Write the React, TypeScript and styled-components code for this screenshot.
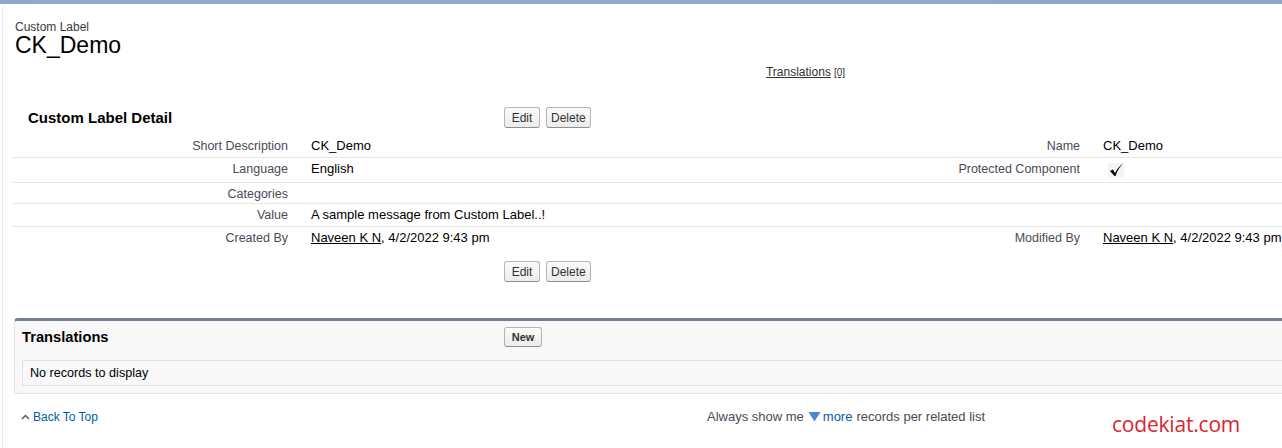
import React from "react";
import styled, { createGlobalStyle } from "styled-components";

const Global = createGlobalStyle`
  html, body { margin: 0; padding: 0; background: #ffffff; overflow: hidden; }
  body { font-family: "Liberation Sans", Arial, sans-serif; color: #000; }
`;

const TopStrip = styled.div`
  height: 4px;
  background: linear-gradient(90deg, #8fa7cb, #90a9cd 40%, #8ea6ca);
`;

const Page = styled.div`
  width: 1600px;
  margin-left: 2px;
  background: #fff;
  border-left: 1px solid #e3e6ea;
  border-top-left-radius: 5px;
  padding: 0 0 40px 10px;
`;

const Header = styled.div`
  padding: 16px 0 0 2px;
  display: flex;
  flex-direction: column;
`;

const HeaderType = styled.div`
  font-size: 12px;
  line-height: 14px;
  color: #3b3b3b;
`;

const HeaderName = styled.h1`
  margin: 0;
  font-size: 23px;
  line-height: 22px;
  font-weight: normal;
  color: #000;
`;

const LinksRow = styled.div`
  display: flex;
  align-items: baseline;
  justify-content: center;
  margin-top: 9px;
  width: 1585px;
`;

const RelLink = styled.a`
  font-size: 12px;
  color: #333;
  text-decoration: underline;
  line-height: 14px;
`;

const Count = styled.span`
  font-size: 10px;
  color: #333;
  margin-left: 3px;
  text-decoration: underline;
`;

const Block = styled.div`
  margin-top: 28px;
  width: 1585px;
`;

const ButtonRow = styled.div<{ $pt: number; $pb: number }>`
  display: grid;
  grid-template-columns: 491px auto;
  align-items: center;
  padding-top: ${(p) => p.$pt}px;
  padding-bottom: ${(p) => p.$pb}px;
`;

const BlockTitle = styled.h2`
  margin: 0;
  padding-left: 15px;
  font-size: 15px;
  font-weight: bold;
  color: #000;
`;

const Buttons = styled.div`
  display: flex;
  gap: 6px;
`;

const Btn = styled.button`
  font-family: "Liberation Sans", Arial, sans-serif;
  font-size: 12px;
  color: #333;
  height: 21px;
  min-width: 36px;
  padding: 0 4px;
  background: linear-gradient(#fbfbfb, #ececec);
  border: 1px solid #b5b5b5;
  border-bottom-color: #8f8f8f;
  border-radius: 3px;
  cursor: pointer;
`;

const NewBtn = styled(Btn)`
  height: 20px;
  min-width: 38px;
  font-weight: bold;
  font-size: 11px;
  padding: 0 6px;
`;

const Row = styled.div<{ $h: number; $last?: boolean }>`
  display: grid;
  grid-template-columns: 285px 507px 285px 1fr;
  height: ${(p) => p.$h}px;
  border-bottom: ${(p) => (p.$last ? "none" : "1px solid #e6e6e6")};
`;

const Label = styled.div`
  text-align: right;
  padding: 4px 10px 0 0;
  font-size: 12.5px;
  line-height: 14px;
  color: #4a4a56;
  white-space: nowrap;
`;

const Value = styled.div`
  padding: 4px 0 0 13px;
  font-size: 13px;
  line-height: 14px;
  color: #000;
  white-space: nowrap;
`;

const UserLink = styled.a`
  color: #000;
  text-decoration: underline;
`;

const CheckBox = styled.span`
  display: inline-flex;
  margin: 0 0 0 4px;
`;

const Related = styled.div`
  margin-top: 36px;
  margin-left: 1px;
  width: 1584px;
  background: #f8f8f8;
  border: 1px solid #e4e4e4;
  border-top: 3px solid #747e96;
  border-radius: 4px;
  padding: 0 7px 7px 7px;
`;

const RelHeader = styled.div`
  display: grid;
  grid-template-columns: 482px auto;
  align-items: start;
  height: 33px;
  padding-top: 6px;
`;

const RelTitle = styled.h3`
  margin: 0;
  font-size: 14.7px;
  line-height: 20px;
  font-weight: bold;
  color: #000;
`;

const EmptyBox = styled.div`
  border: 1px solid #e0e3e5;
  background: #f8f8f8;
  height: 24px;
  display: flex;
  align-items: center;
  padding-left: 7px;
  font-size: 12.6px;
  color: #000;
`;

const Footer = styled.div`
  display: grid;
  grid-template-columns: 686px auto;
  align-items: center;
  margin-top: 15px;
  padding-left: 8px;
  font-size: 12px;
`;

const BackTop = styled.a`
  display: inline-flex;
  align-items: center;
  gap: 3px;
  color: #015ba7;
  text-decoration: none;
`;

const ShowMore = styled.div`
  color: #4a4a56;
  font-size: 13px;
  display: flex;
  align-items: center;
  gap: 4px;
`;

const MoreLink = styled.a`
  color: #015ba7;
  text-decoration: none;
  margin-left: -2px;
`;

const Watermark = styled.div`
  position: absolute;
  left: 1112px;
  top: 410px;
  font-family: "Open Sans", "Noto Sans", sans-serif;
  font-size: 21px;
  color: #d8262d;
  letter-spacing: -0.2px;
`;

const Check = () => (
  <svg width="18" height="16" viewBox="0 0 18 16">
    <rect x="1" y="1" width="16" height="14" fill="#f3f3f3" />
    <path d="M3 9 L6 7.5 L8 11 C10 7 12.5 4 16 1.5 C13 4.5 10.5 8 8.5 14 L7.5 14 Z" fill="#000" />
  </svg>
);

const Caret = () => (
  <svg width="9" height="6" viewBox="0 0 9 6">
    <path d="M1 5 L4.5 1.5 L8 5" fill="none" stroke="#555" strokeWidth="1.4" />
  </svg>
);

const Tri = () => (
  <svg width="13" height="11" viewBox="0 0 13 11">
    <path d="M0.5 1 L12.5 1 L6.5 10.5 Z" fill="#4b86d0" />
  </svg>
);

type Field = { label: string; value: React.ReactNode; label2?: string; value2?: React.ReactNode; h: number };

const fields: Field[] = [
  { label: "Short Description", value: "CK_Demo", label2: "Name", value2: "CK_Demo", h: 22 },
  { label: "Language", value: "English", label2: "Protected Component", value2: <CheckBox><Check /></CheckBox>, h: 24 },
  { label: "Categories", value: "", h: 20 },
  { label: "Value", value: "A sample message from Custom Label..!", h: 22 },
  {
    label: "Created By",
    value: (<><UserLink href="#">Naveen K N</UserLink>, 4/2/2022 9:43 pm</>),
    label2: "Modified By",
    value2: (<><UserLink href="#">Naveen K N</UserLink>, 4/2/2022 9:43 pm</>),
    h: 24,
  },
];

export default function App() {
  return (
    <>
      <Global />
      <TopStrip />
      <Page>
        <Header>
          <HeaderType>Custom Label</HeaderType>
          <HeaderName>CK_Demo</HeaderName>
        </Header>
        <LinksRow>
          <RelLink href="#">Translations</RelLink>
          <Count>[0]</Count>
        </LinksRow>
        <Block>
          <ButtonRow $pt={0} $pb={7}>
            <BlockTitle>Custom Label Detail</BlockTitle>
            <Buttons>
              <Btn>Edit</Btn>
              <Btn>Delete</Btn>
            </Buttons>
          </ButtonRow>
          {fields.map((f, i) => (
            <Row key={f.label} $h={f.h} $last={i === fields.length - 1}>
              <Label>{f.label}</Label>
              <Value>{f.value}</Value>
              <Label>{f.label2 ?? ""}</Label>
              <Value>{f.value2 ?? ""}</Value>
            </Row>
          ))}
          <ButtonRow $pt={10} $pb={0}>
            <div />
            <Buttons>
              <Btn>Edit</Btn>
              <Btn>Delete</Btn>
            </Buttons>
          </ButtonRow>
        </Block>
        <Related>
          <RelHeader>
            <RelTitle>Translations</RelTitle>
            <div>
              <NewBtn>New</NewBtn>
            </div>
          </RelHeader>
          <EmptyBox>No records to display</EmptyBox>
        </Related>
        <Footer>
          <BackTop href="#">
            <Caret />
            Back To Top
          </BackTop>
          <ShowMore>
            Always show me
            <Tri />
            <MoreLink href="#">more</MoreLink>
            records per related list
          </ShowMore>
        </Footer>
      </Page>
      <Watermark>codekiat.com</Watermark>
    </>
  );
}
